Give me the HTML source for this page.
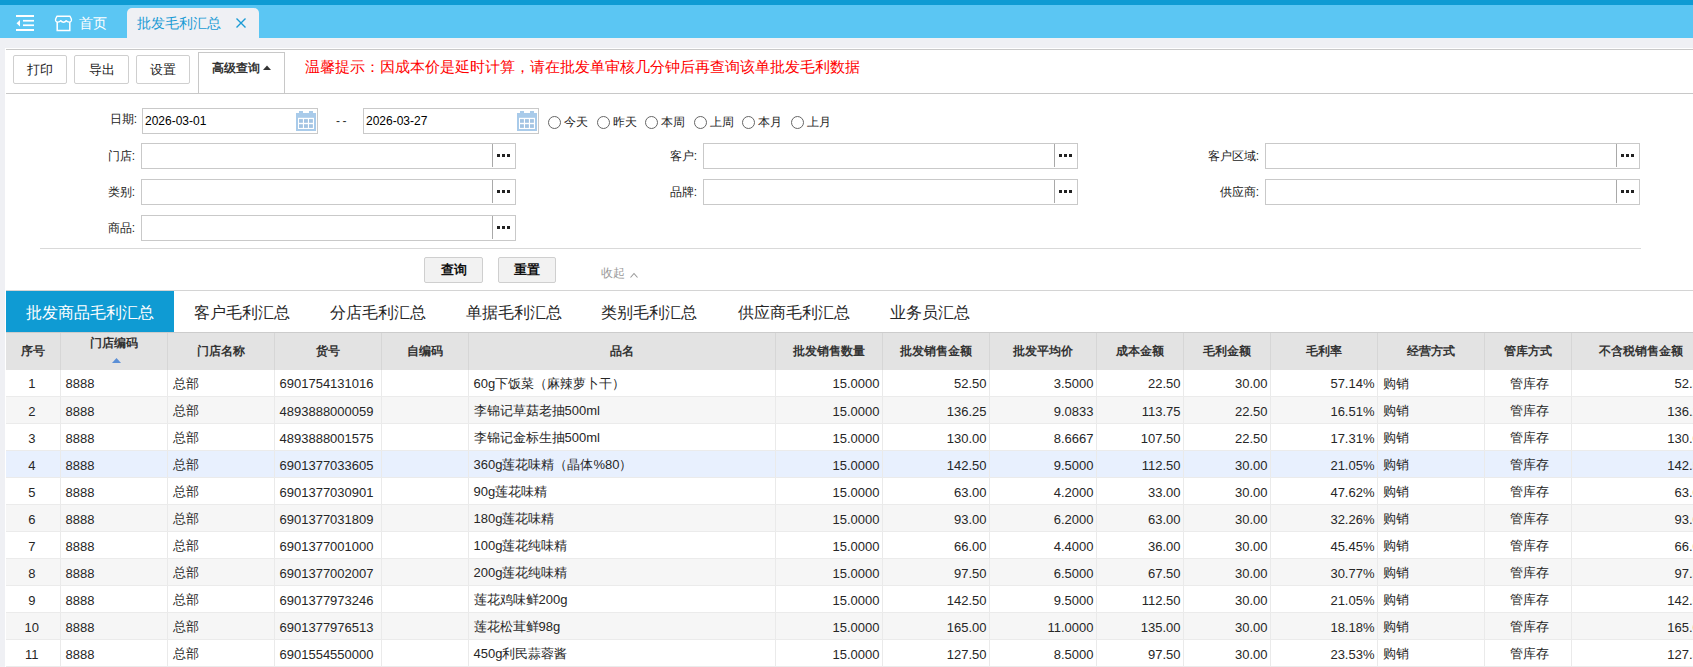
<!DOCTYPE html>
<html><head><meta charset="utf-8">
<style>
*{box-sizing:border-box;margin:0;padding:0}
html,body{width:1693px;height:667px;overflow:hidden;background:#eff0f4;font-family:"Liberation Sans",sans-serif;color:#333}
.a{position:absolute}
#topdark{left:0;top:0;width:1693px;height:5px;background:#0e9bd3}
#toplight{left:0;top:5px;width:1693px;height:33px;background:#5bc6f3}
#home{left:79px;top:14px;font-size:14px;line-height:18px;color:#fff}
#tab{left:127px;top:8px;width:132px;height:30px;background:#eff0f4;border-radius:5px 5px 0 0}
#tabtxt{left:137px;top:14px;font-size:14px;line-height:18px;color:#1a9bd5}
#panel{left:5px;top:48px;width:1688px;height:619px;background:#fff}
.hl{height:1px;background:#cdcdcd}
.btn{border:1px solid #cfcfcf;border-radius:2px;background:#fff;font-size:13px;text-align:center;color:#222}
#warn{left:305px;top:58px;font-size:15px;line-height:18px;color:#f00;white-space:nowrap}
.lbl{font-size:12px;line-height:14px;color:#222;text-align:right;white-space:nowrap}
.inp{border:1px solid #c9c9c9;background:#fff}
.dv{width:1px;background:#a9a9a9}
.dots{width:14px;height:4px}
.dots i{position:absolute;top:0;width:3px;height:3px;background:#222}
.rad{width:13px;height:13px;border:1px solid #666;border-radius:50%}
.rtx{font-size:12px;line-height:14px;color:#222;white-space:nowrap}
.tabs{font-size:16px;line-height:20px;color:#262626;white-space:nowrap}
table{border-collapse:collapse;table-layout:fixed;position:absolute;left:6px;top:332px;width:1704px}
th{background:#e3e3e3;font-size:12px;font-weight:bold;height:37px;border-left:1px solid #d6d6d6;border-top:1px solid #cccccc;text-align:center;padding:0;color:#333}
td{font-size:13px;height:27px;border-left:1px solid #eaeaea;border-bottom:1px solid #ebebeb;padding:2px 2px 0 5px;white-space:nowrap;overflow:hidden;color:#262626}
td:last-child{padding-right:3px}
tr.e td{background:#f6f6f6}
tr.h td{background:#e8f0fe}
td.c{text-align:center;padding-left:5px}
td.s{text-align:center;padding-left:2px;padding-right:4px;border-left:none}
th:first-child{border-left:none}
td.r{text-align:right}
</style></head><body>
<div class="a" id="topdark"></div>
<div class="a" id="toplight"></div>
<!-- menu icon -->
<svg class="a" style="left:16px;top:15px" width="18" height="17" viewBox="0 0 18 17">
<rect x="0" y="0" width="18" height="2" fill="#fff"/>
<rect x="7" y="4.9" width="11" height="1.7" fill="#fff"/>
<rect x="7" y="9.4" width="11" height="1.7" fill="#fff"/>
<rect x="0" y="14" width="18" height="2" fill="#fff"/>
<path d="M0.5 8.2 L4 5 V11.5 Z" fill="#fff"/>
</svg>
<!-- home icon -->
<svg class="a" style="left:52px;top:12px" width="24" height="22" viewBox="0 0 24 22">
<path d="M5 4.2 H17.9 Q19.9 7.4 19.4 8.7 Q18.8 10.1 17.1 10.1 Q15.1 10 14.2 8.7 Q13.3 10.2 11.5 10.2 Q9.7 10.2 8.8 8.7 Q7.9 10 5.9 10.1 Q4.2 10.1 3.6 8.7 Q3.1 7.4 5 4.2 Z" fill="none" stroke="#fff" stroke-width="1.4" stroke-linejoin="round"/>
<path d="M5.2 10.1 V18.6 H17.8 V10.1" fill="none" stroke="#fff" stroke-width="1.5"/>
</svg>
<div class="a" id="home">首页</div>
<div class="a" id="tab"></div>
<div class="a" id="tabtxt">批发毛利汇总</div>
<svg class="a" style="left:236px;top:18px" width="10" height="10" viewBox="0 0 10 10"><path d="M0.5 0.5 L9.5 9.5 M9.5 0.5 L0.5 9.5" stroke="#1a9bd5" stroke-width="1.4"/></svg>

<div class="a" id="panel"></div>
<div class="a hl" style="left:6px;top:49px;width:1687px;background:#c8c8c8"></div>
<div class="a hl" style="left:6px;top:93px;width:1687px;background:#c8c8c8"></div>

<div class="a btn" style="left:13px;top:55px;width:54px;height:29px;line-height:27px">打印</div>
<div class="a btn" style="left:74px;top:55px;width:55px;height:29px;line-height:27px">导出</div>
<div class="a btn" style="left:136px;top:55px;width:54px;height:29px;line-height:27px">设置</div>
<div class="a" style="left:198px;top:52px;width:87px;height:41px;border:1px solid #c8c8c8;border-bottom:none;background:#fff"></div>
<div class="a" style="left:212px;top:60px;font-size:12px;line-height:16px;font-weight:bold;color:#333;white-space:nowrap">高级查询</div>
<svg class="a" style="left:263px;top:65px" width="8" height="5" viewBox="0 0 8 5"><path d="M0 5 L4 0.5 L8 5 Z" fill="#333"/></svg>
<div class="a" id="warn">温馨提示：因成本价是延时计算，请在批发单审核几分钟后再查询该单批发毛利数据</div>

<!-- date row -->
<div class="a lbl" style="left:60px;top:112px;width:77px">日期:</div>
<div class="a inp" style="left:142px;top:108px;width:176px;height:26px"></div>
<div class="a" style="left:145px;top:113px;font-size:12px;line-height:16px;color:#000">2026-03-01</div>
<svg class="a" style="left:296px;top:111px" width="20" height="20" viewBox="0 0 20 20">
<rect x="3" y="0" width="4" height="2.2" fill="#a9cbea"/><rect x="13" y="0" width="4" height="2.2" fill="#a9cbea"/>
<rect x="0" y="2" width="20" height="18" fill="#a9cbea"/>
<rect x="2" y="6.8" width="16" height="11.2" fill="#fff"/>
<rect x="3" y="8.1" width="3.9" height="3.7" fill="#a3c4e3"/><rect x="8" y="8.1" width="3.9" height="3.7" fill="#a3c4e3"/><rect x="13" y="8.1" width="3.9" height="3.7" fill="#a3c4e3"/>
<rect x="3" y="13.2" width="3.9" height="3.7" fill="#a3c4e3"/><rect x="8" y="13.2" width="3.9" height="3.7" fill="#a3c4e3"/><rect x="13" y="13.2" width="3.9" height="3.7" fill="#a3c4e3"/>
</svg>
<div class="a" style="left:336px;top:113px;font-size:12px;line-height:16px;color:#333;letter-spacing:2.5px">--</div>
<div class="a inp" style="left:363px;top:108px;width:176px;height:26px"></div>
<div class="a" style="left:366px;top:113px;font-size:12px;line-height:16px;color:#000">2026-03-27</div>
<svg class="a" style="left:517px;top:111px" width="20" height="20" viewBox="0 0 20 20">
<rect x="3" y="0" width="4" height="2.2" fill="#a9cbea"/><rect x="13" y="0" width="4" height="2.2" fill="#a9cbea"/>
<rect x="0" y="2" width="20" height="18" fill="#a9cbea"/>
<rect x="2" y="6.8" width="16" height="11.2" fill="#fff"/>
<rect x="3" y="8.1" width="3.9" height="3.7" fill="#a3c4e3"/><rect x="8" y="8.1" width="3.9" height="3.7" fill="#a3c4e3"/><rect x="13" y="8.1" width="3.9" height="3.7" fill="#a3c4e3"/>
<rect x="3" y="13.2" width="3.9" height="3.7" fill="#a3c4e3"/><rect x="8" y="13.2" width="3.9" height="3.7" fill="#a3c4e3"/><rect x="13" y="13.2" width="3.9" height="3.7" fill="#a3c4e3"/>
</svg>
<div class="a rad" style="left:548px;top:116px"></div><div class="a rtx" style="left:564px;top:115px">今天</div>
<div class="a rad" style="left:597px;top:116px"></div><div class="a rtx" style="left:613px;top:115px">昨天</div>
<div class="a rad" style="left:645px;top:116px"></div><div class="a rtx" style="left:661px;top:115px">本周</div>
<div class="a rad" style="left:694px;top:116px"></div><div class="a rtx" style="left:710px;top:115px">上周</div>
<div class="a rad" style="left:742px;top:116px"></div><div class="a rtx" style="left:758px;top:115px">本月</div>
<div class="a rad" style="left:791px;top:116px"></div><div class="a rtx" style="left:807px;top:115px">上月</div>

<div class="a lbl" style="left:39px;top:149px;width:96px">门店:</div>
<div class="a inp" style="left:141px;top:143px;width:375px;height:26px"></div>
<div class="a dv" style="left:492px;top:144px;height:23px"></div>
<div class="a dots" style="left:497px;top:154px"><i style="left:0"></i><i style="left:5px"></i><i style="left:10px"></i></div>
<div class="a lbl" style="left:601px;top:149px;width:96px">客户:</div>
<div class="a inp" style="left:703px;top:143px;width:375px;height:26px"></div>
<div class="a dv" style="left:1054px;top:144px;height:23px"></div>
<div class="a dots" style="left:1059px;top:154px"><i style="left:0"></i><i style="left:5px"></i><i style="left:10px"></i></div>
<div class="a lbl" style="left:1163px;top:149px;width:96px">客户区域:</div>
<div class="a inp" style="left:1265px;top:143px;width:375px;height:26px"></div>
<div class="a dv" style="left:1616px;top:144px;height:23px"></div>
<div class="a dots" style="left:1621px;top:154px"><i style="left:0"></i><i style="left:5px"></i><i style="left:10px"></i></div>
<div class="a lbl" style="left:39px;top:185px;width:96px">类别:</div>
<div class="a inp" style="left:141px;top:179px;width:375px;height:26px"></div>
<div class="a dv" style="left:492px;top:180px;height:23px"></div>
<div class="a dots" style="left:497px;top:190px"><i style="left:0"></i><i style="left:5px"></i><i style="left:10px"></i></div>
<div class="a lbl" style="left:601px;top:185px;width:96px">品牌:</div>
<div class="a inp" style="left:703px;top:179px;width:375px;height:26px"></div>
<div class="a dv" style="left:1054px;top:180px;height:23px"></div>
<div class="a dots" style="left:1059px;top:190px"><i style="left:0"></i><i style="left:5px"></i><i style="left:10px"></i></div>
<div class="a lbl" style="left:1163px;top:185px;width:96px">供应商:</div>
<div class="a inp" style="left:1265px;top:179px;width:375px;height:26px"></div>
<div class="a dv" style="left:1616px;top:180px;height:23px"></div>
<div class="a dots" style="left:1621px;top:190px"><i style="left:0"></i><i style="left:5px"></i><i style="left:10px"></i></div>
<div class="a lbl" style="left:39px;top:221px;width:96px">商品:</div>
<div class="a inp" style="left:141px;top:215px;width:375px;height:26px"></div>
<div class="a dv" style="left:492px;top:216px;height:23px"></div>
<div class="a dots" style="left:497px;top:226px"><i style="left:0"></i><i style="left:5px"></i><i style="left:10px"></i></div>

<div class="a" style="left:40px;top:248px;width:1601px;height:1px;background:#d9d9d9"></div>
<div class="a btn" style="left:424px;top:257px;width:59px;height:26px;line-height:24px;background:#f2f2f2;font-weight:bold;color:#111">查询</div>
<div class="a btn" style="left:498px;top:257px;width:58px;height:26px;line-height:24px;background:#f2f2f2;font-weight:bold;color:#111">重置</div>
<div class="a" style="left:601px;top:266px;font-size:12px;line-height:14px;color:#999">收起</div>
<svg class="a" style="left:630px;top:272px" width="8" height="6" viewBox="0 0 8 6"><path d="M0.5 5.5 L4 1.5 L7.5 5.5" fill="none" stroke="#999" stroke-width="1.1"/></svg>

<!-- tabs -->
<div class="a" style="left:6px;top:290px;width:1687px;height:1px;background:#d4d4d4"></div>
<div class="a" style="left:6px;top:291px;width:168px;height:41px;background:#0f9bd3"></div>
<div class="a tabs" style="left:26px;top:303px;color:#fff">批发商品毛利汇总</div>
<div class="a tabs" style="left:194px;top:303px">客户毛利汇总</div>
<div class="a tabs" style="left:330px;top:303px">分店毛利汇总</div>
<div class="a tabs" style="left:466px;top:303px">单据毛利汇总</div>
<div class="a tabs" style="left:601px;top:303px">类别毛利汇总</div>
<div class="a tabs" style="left:738px;top:303px">供应商毛利汇总</div>
<div class="a tabs" style="left:890px;top:303px">业务员汇总</div>

<table><colgroup>
<col style="width:54px">
<col style="width:107px">
<col style="width:107px">
<col style="width:107px">
<col style="width:87px">
<col style="width:307px">
<col style="width:107px">
<col style="width:107px">
<col style="width:107px">
<col style="width:87px">
<col style="width:87px">
<col style="width:107px">
<col style="width:107px">
<col style="width:87px">
<col style="width:139px">
</colgroup><tr>
<th>序号</th>
<th style="position:relative"><span style="position:absolute;left:0;right:0;top:2px">门店编码</span><svg style="position:absolute;left:51px;top:25px" width="9" height="5" viewBox="0 0 9 5"><path d="M0 5 L4.5 0 L9 5Z" fill="#5b8fd6"/></svg></th>
<th>门店名称</th>
<th>货号</th>
<th>自编码</th>
<th>品名</th>
<th>批发销售数量</th>
<th>批发销售金额</th>
<th>批发平均价</th>
<th>成本金额</th>
<th>毛利金额</th>
<th>毛利率</th>
<th>经营方式</th>
<th>管库方式</th>
<th>不含税销售金额</th>
</tr>
<tr class=""><td class="s">1</td><td class="">8888</td><td class="">总部</td><td class="">6901754131016</td><td class=""></td><td class="">60g下饭菜（麻辣萝卜干）</td><td class="r">15.0000</td><td class="r">52.50</td><td class="r">3.5000</td><td class="r">22.50</td><td class="r">30.00</td><td class="r">57.14%</td><td class="">购销</td><td class="c">管库存</td><td class="r">52.50</td></tr>
<tr class="e"><td class="s">2</td><td class="">8888</td><td class="">总部</td><td class="">4893888000059</td><td class=""></td><td class="">李锦记草菇老抽500ml</td><td class="r">15.0000</td><td class="r">136.25</td><td class="r">9.0833</td><td class="r">113.75</td><td class="r">22.50</td><td class="r">16.51%</td><td class="">购销</td><td class="c">管库存</td><td class="r">136.25</td></tr>
<tr class=""><td class="s">3</td><td class="">8888</td><td class="">总部</td><td class="">4893888001575</td><td class=""></td><td class="">李锦记金标生抽500ml</td><td class="r">15.0000</td><td class="r">130.00</td><td class="r">8.6667</td><td class="r">107.50</td><td class="r">22.50</td><td class="r">17.31%</td><td class="">购销</td><td class="c">管库存</td><td class="r">130.00</td></tr>
<tr class="h"><td class="s">4</td><td class="">8888</td><td class="">总部</td><td class="">6901377033605</td><td class=""></td><td class="">360g莲花味精（晶体%80）</td><td class="r">15.0000</td><td class="r">142.50</td><td class="r">9.5000</td><td class="r">112.50</td><td class="r">30.00</td><td class="r">21.05%</td><td class="">购销</td><td class="c">管库存</td><td class="r">142.50</td></tr>
<tr class=""><td class="s">5</td><td class="">8888</td><td class="">总部</td><td class="">6901377030901</td><td class=""></td><td class="">90g莲花味精</td><td class="r">15.0000</td><td class="r">63.00</td><td class="r">4.2000</td><td class="r">33.00</td><td class="r">30.00</td><td class="r">47.62%</td><td class="">购销</td><td class="c">管库存</td><td class="r">63.00</td></tr>
<tr class="e"><td class="s">6</td><td class="">8888</td><td class="">总部</td><td class="">6901377031809</td><td class=""></td><td class="">180g莲花味精</td><td class="r">15.0000</td><td class="r">93.00</td><td class="r">6.2000</td><td class="r">63.00</td><td class="r">30.00</td><td class="r">32.26%</td><td class="">购销</td><td class="c">管库存</td><td class="r">93.00</td></tr>
<tr class=""><td class="s">7</td><td class="">8888</td><td class="">总部</td><td class="">6901377001000</td><td class=""></td><td class="">100g莲花纯味精</td><td class="r">15.0000</td><td class="r">66.00</td><td class="r">4.4000</td><td class="r">36.00</td><td class="r">30.00</td><td class="r">45.45%</td><td class="">购销</td><td class="c">管库存</td><td class="r">66.00</td></tr>
<tr class="e"><td class="s">8</td><td class="">8888</td><td class="">总部</td><td class="">6901377002007</td><td class=""></td><td class="">200g莲花纯味精</td><td class="r">15.0000</td><td class="r">97.50</td><td class="r">6.5000</td><td class="r">67.50</td><td class="r">30.00</td><td class="r">30.77%</td><td class="">购销</td><td class="c">管库存</td><td class="r">97.50</td></tr>
<tr class=""><td class="s">9</td><td class="">8888</td><td class="">总部</td><td class="">6901377973246</td><td class=""></td><td class="">莲花鸡味鲜200g</td><td class="r">15.0000</td><td class="r">142.50</td><td class="r">9.5000</td><td class="r">112.50</td><td class="r">30.00</td><td class="r">21.05%</td><td class="">购销</td><td class="c">管库存</td><td class="r">142.50</td></tr>
<tr class="e"><td class="s">10</td><td class="">8888</td><td class="">总部</td><td class="">6901377976513</td><td class=""></td><td class="">莲花松茸鲜98g</td><td class="r">15.0000</td><td class="r">165.00</td><td class="r">11.0000</td><td class="r">135.00</td><td class="r">30.00</td><td class="r">18.18%</td><td class="">购销</td><td class="c">管库存</td><td class="r">165.00</td></tr>
<tr class=""><td class="s">11</td><td class="">8888</td><td class="">总部</td><td class="">6901554550000</td><td class=""></td><td class="">450g利民蒜蓉酱</td><td class="r">15.0000</td><td class="r">127.50</td><td class="r">8.5000</td><td class="r">97.50</td><td class="r">30.00</td><td class="r">23.53%</td><td class="">购销</td><td class="c">管库存</td><td class="r">127.50</td></tr>
</table>
</body></html>
